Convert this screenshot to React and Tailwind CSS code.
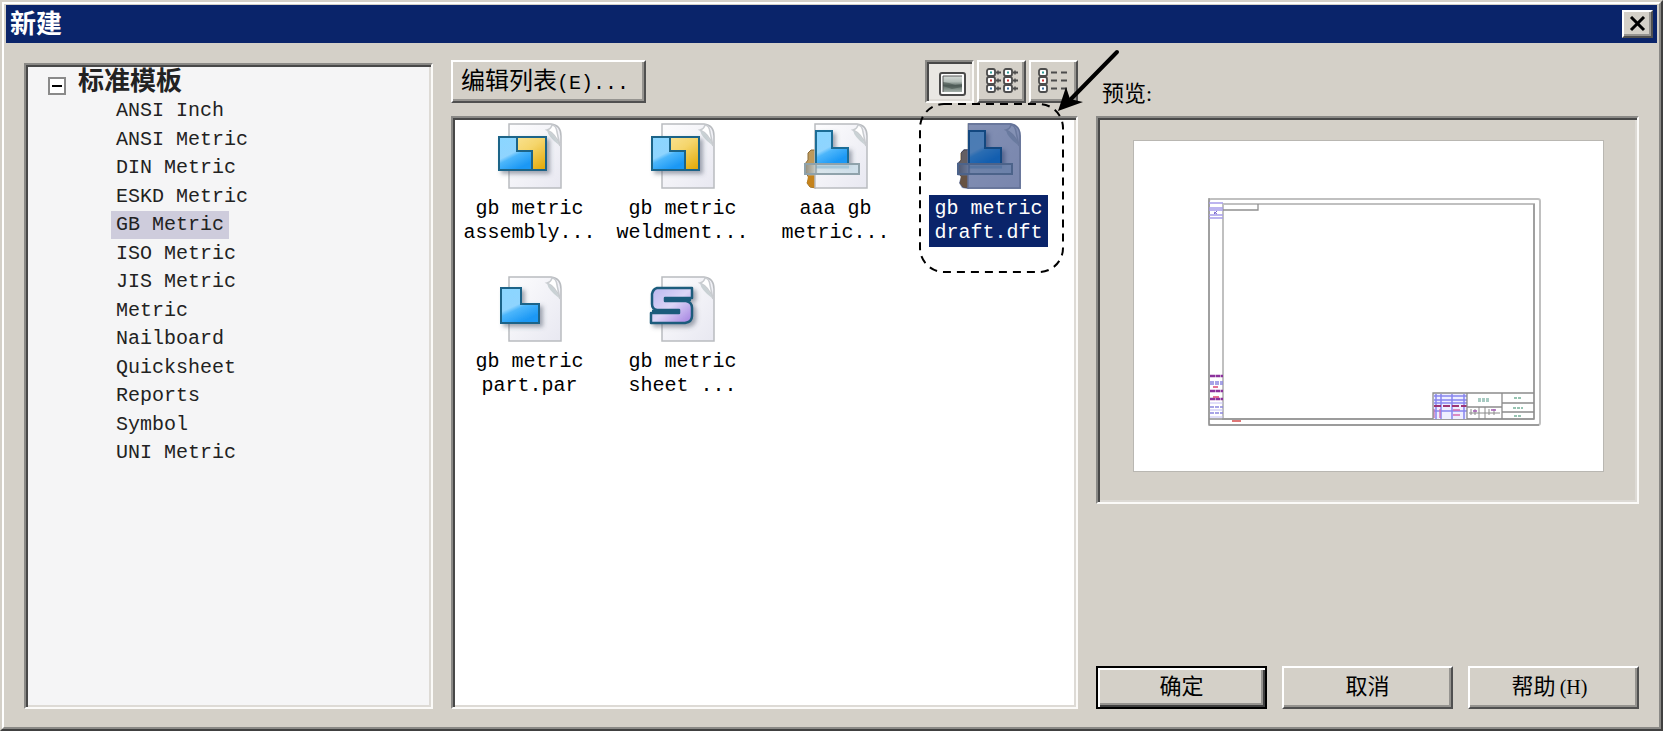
import React, { useState } from 'react';

const raised = 'bg-[#d4d0c8] border-2 border-t-white border-l-white border-b-[#505050] border-r-[#505050] shadow-[inset_-2px_-2px_0_#969490]';
const sunken = 'border-2 border-t-[#8a8986] border-l-[#8a8986] border-b-[#fbfaf8] border-r-[#fbfaf8] shadow-[inset_2px_2px_0_#484848,inset_-2px_-2px_0_#dddad5]';
const mono = "font-['Liberation_Mono','Noto_Sans_CJK_SC',monospace]";

const templates = [
    'ANSI Inch', 'ANSI Metric', 'DIN Metric', 'ESKD Metric', 'GB Metric', 'ISO Metric', 'JIS Metric',
    'Metric', 'Nailboard', 'Quicksheet', 'Reports', 'Symbol', 'UNI Metric',
];

const files = [
    { id: 'asm', kind: 'assembly', lines: ['gb metric', 'assembly...'] },
    { id: 'weld', kind: 'assembly', lines: ['gb metric', 'weldment...'] },
    { id: 'aaa', kind: 'draft', lines: ['aaa gb', 'metric...'] },
    { id: 'dft', kind: 'draft', lines: ['gb metric', 'draft.dft'] },
    { id: 'par', kind: 'part', lines: ['gb metric', 'part.par'] },
    { id: 'psm', kind: 'sheet', lines: ['gb metric', 'sheet ...'] },
];

const Gradients = () => (
    <svg className="absolute w-0 h-0" aria-hidden="true">
        <defs>
            <linearGradient id="blue" x1="0" y1="0" x2="0.5" y2="1">
                <stop offset="0" stopColor="#8ad6ff" />
                <stop offset="0.55" stopColor="#8fd4fe" />
                <stop offset="0.66" stopColor="#4cb6fb" />
                <stop offset="1" stopColor="#1b98f5" />
            </linearGradient>
            <linearGradient id="gold" x1="0" y1="0" x2="1" y2="1">
                <stop offset="0" stopColor="#fbe9a6" />
                <stop offset="0.5" stopColor="#f5d56b" />
                <stop offset="1" stopColor="#e2a600" />
            </linearGradient>
            <linearGradient id="violet" x1="0" y1="0" x2="1" y2="1">
                <stop offset="0" stopColor="#b9b6ee" />
                <stop offset="0.5" stopColor="#dcd6f7" />
                <stop offset="1" stopColor="#a27ee0" />
            </linearGradient>
            <linearGradient id="paper" x1="0" y1="0" x2="1" y2="1">
                <stop offset="0" stopColor="#fdfdfe" />
                <stop offset="1" stopColor="#e8e8f1" />
            </linearGradient>
            <linearGradient id="board" x1="0" y1="0" x2="1" y2="0">
                <stop offset="0" stopColor="#8e8c80" />
                <stop offset="0.25" stopColor="#d5e3ea" />
                <stop offset="1" stopColor="#c8dce8" />
            </linearGradient>
            <linearGradient id="photo" x1="0" y1="0" x2="0" y2="1">
                <stop offset="0" stopColor="#d5dbd8" />
                <stop offset="0.35" stopColor="#b3bdb8" />
                <stop offset="0.6" stopColor="#5d6b66" />
                <stop offset="1" stopColor="#a4b0aa" />
            </linearGradient>
            <filter id="soft" x="-20%" y="-20%" width="150%" height="150%">
                <feDropShadow dx="3" dy="3" stdDeviation="2" floodColor="#4a5568" floodOpacity="0.5" />
            </filter>
        </defs>
    </svg>
);

const FileIcon = ({ kind, selected }) => (
    <svg viewBox="0 0 68 68" className="w-[68px] h-[68px] shrink-0" aria-hidden="true">
        {kind === 'draft' && (
            <g>
                <path d="M9 28 H14 V66 L8 65 L5 61 L7 56 L3 49 L3 42 L6 38 L6 31 Z" fill="#bd9a5c" stroke="#8a6a38" strokeWidth="1" />
                <path d="M6 54 H13 V66 L8 65 L5 61 Z" fill="#c5831c" />
            </g>
        )}
        <path d="M13 2 H55 Q65 3 65 14 V66 H13 Z" fill="url(#paper)" stroke="#b9bcc0" strokeWidth="1.5" />
        <path d="M56 3 Q60 3 61 10 L64 24 Q60 12 51 8 Q55 7 56 3 Z" fill="#fff" stroke="#c9ccd0" strokeWidth="1.5" />
        <path d="M51 8 Q52 15 63 23 Q60 13 51 8Z" fill="#c9d1d4" />
        {kind === 'assembly' && (
            <g stroke="#1c6488" strokeWidth="2">
                <rect x="3" y="15" width="47" height="33" fill="url(#gold)" filter="url(#soft)" />
                <path d="M3 15 H21 V29 H36 V48 H3 Z" fill="url(#blue)" />
            </g>
        )}
        {kind === 'part' && (
            <path d="M5 13 H25 V29 H43 V48 H5 Z" fill="url(#blue)" stroke="#1c6488" strokeWidth="2" filter="url(#soft)" />
        )}
        {kind === 'sheet' && (
            <g>
                <path
                    d="M8 13 H43 V23 H16 V26 H37 Q43 27 43 33 V41 Q43 47 36 48 H2 V38 H30 V35 H8 Q3 34 3 29 V19 Q4 14 8 13 Z"
                    fill="url(#violet)" stroke="#1a5b7c" strokeWidth="2.5" strokeLinejoin="round" filter="url(#soft)"
                />
                <path d="M16 24.5 H42 M3 36.5 H30" stroke="#1a5b7c" strokeWidth="3.5" />
            </g>
        )}
        {kind === 'draft' && (
            <g>
                <path d="M14 9 H30 V26 H46 V42 H14 Z" fill="url(#blue)" stroke="#1d6d96" strokeWidth="2" filter="url(#soft)" />
                <rect x="3" y="42" width="54" height="10" fill="url(#board)" fillOpacity="0.85" stroke="#8fa2ab" strokeWidth="2" />
                <path d="M14 45 H47" stroke="#a4c6d8" strokeWidth="3" />
                <path d="M14 43 V51" stroke="#7c8c92" strokeWidth="1" />
            </g>
        )}
        {selected && (
            <path d="M13 1 H56 Q66 3 66 14 V67 H13 L7 66 L4 61 L6 54 L2 53 V41 L6 38 L6 30 L9 27 H13 Z" fill="#0a246a" fillOpacity="0.5" />
        )}
    </svg>
);

// Dashed frame and arrow that point out the selected template
const Callout = () => (
    <svg viewBox="0 0 145 170" className="absolute z-10 left-[7px] -top-[19px] w-[145px] h-[170px] overflow-visible pointer-events-none" aria-hidden="true">
        <rect x="1" y="1" width="143" height="168" rx="24" fill="none" stroke="#000" strokeWidth="2" strokeDasharray="8 6" />
        <path d="M198 -51 L152 -4" stroke="#000" strokeWidth="4" strokeLinecap="round" />
        <path d="M139 8 L147 -16 L151 -4 L164 -1 Z" fill="#000" />
    </svg>
);

const Knob = ({ x, y, dot }) => (
    <g>
        <rect x={x} y={y} width="8" height="7" rx="2" fill="#fff" stroke="#4c4c4c" strokeWidth="1.8" />
        <rect x={x + 3} y={y + 2.5} width="2" height="2" fill={dot} />
    </g>
);

const dots = ['#2e9a96', '#c33', '#3a6f9e'];

const ListIcon = () => (
    <svg viewBox="0 0 32 28" className="w-8 h-7" aria-hidden="true">
        {dots.map((dot, i) => (
            <g key={dot}>
                <Knob x={1} y={1 + i * 8} dot={dot} />
                <Knob x={18} y={1 + i * 8} dot={dot} />
                <path d={`M10 ${4.5 + i * 8} H15 M27 ${4.5 + i * 8} H32`} stroke="#4c4c4c" strokeWidth="1.8" />
                <path d={`M12 ${2.5 + i * 8} V${6.5 + i * 8} M29 ${2.5 + i * 8} V${6.5 + i * 8}`} stroke="#4c4c4c" strokeWidth="1.4" />
            </g>
        ))}
    </svg>
);

const DetailIcon = () => (
    <svg viewBox="0 0 32 28" className="w-8 h-7" aria-hidden="true">
        {dots.map((dot, i) => (
            <g key={dot}>
                <Knob x={1} y={1 + i * 8} dot={dot} />
                <path d={`M13 ${4.5 + i * 8} H19 M23 ${4.5 + i * 8} H29`} stroke="#4c4c4c" strokeWidth="1.8" />
            </g>
        ))}
    </svg>
);

const LargeIcon = () => (
    <svg viewBox="0 0 32 28" className="w-8 h-7 mt-1 ml-1" aria-hidden="true">
        <rect x="4" y="3" width="25" height="22" rx="2" fill="#fdfdfd" stroke="#4a4a4a" strokeWidth="2" />
        <rect x="7" y="6" width="19" height="16" fill="url(#photo)" />
        <path d="M7 22 V6 H26" fill="none" stroke="#5a5a5a" strokeWidth="1" />
        <path d="M7 12 L13 13 L19 15 L26 14 V17 L16 19 L7 16 Z" fill="#3d4a45" fillOpacity="0.5" />
    </svg>
);

const Drawing = () => (
    <svg viewBox="0 0 469 330" className="block w-full bg-white outline-1 outline-[#b9b7b2]" role="img" aria-label="gb metric draft.dft">
        <g fill="none" stroke="#c0c0c0" strokeWidth="2">
            <rect x="75" y="58" width="331" height="226" rx="2" />
            <rect x="89" y="63" width="311" height="215" />
        </g>
        <path d="M75 57 V284 H405" fill="none" stroke="#909090" strokeWidth="1.3" />
        <path d="M75 278 H400 M400 63 V278 M89 69 H124 V63" fill="none" stroke="#909090" strokeWidth="1.3" />
        <path d="M75 62 H89 M75 67 H89 M75 69 H89 M75 74 H89 M75 77 H89" stroke="#a79cea" strokeWidth="1.3" />
        <path d="M80 71 L83 73 M83 70 L80 73" stroke="#7765cf" strokeWidth="1" />
        <path d="M76 235 H89 M76 250 H89 M76 258 H89" stroke="#8c329c" strokeWidth="2.4" strokeDasharray="5 0.5" />
        <path d="M79 246 H84 M79 256 H85" stroke="#dd4774" strokeWidth="1.5" />
        <path d="M76 241 H89 M76 243 H89 M76 266 H89 M76 272 H89" stroke="#8c87e0" strokeWidth="1.6" strokeDasharray="4 1" />
        <path d="M76 262 H89 M76 269 H89 M76 276 H89" stroke="#c2bdf3" strokeWidth="1" />
        <path d="M98 280 H107" stroke="#d34a4a" strokeWidth="1.5" />
        <rect x="299" y="252" width="34" height="26" fill="#eeeeff" />
        <path d="M300 255 H333 M300 259 H333 M300 262 H333 M300 270 H333 M302 253 V278 M307 253 V278 M318 253 V278 M330 253 V278" stroke="#8785ef" strokeWidth="1.5" />
        <path d="M300 265 H333" stroke="#9c3474" strokeWidth="2" strokeDasharray="7 2" />
        <path d="M300 268 V277 M306 268 V277 M319 269 H326 M319 274 H326" stroke="#d46ab0" strokeWidth="1.3" />
        <path d="M299 278 V252 H400 M333 252 V278 M368 252 V278 M333 266 H368 M368 262 H400 M368 271 H400" fill="none" stroke="#8c8c8c" strokeWidth="1.3" />
        <path d="M337 268 V274 M341 268 V274 M345 266 V278 M351 266 V278 M355 268 V274 M360 268 V274 M335 272 H366" stroke="#8a8a8a" strokeWidth="1" />
        <path d="M339 270 H343 M357 269 H362" stroke="#a35bb4" strokeWidth="1.5" />
        <path d="M344 258 H356 M344 260 H356" stroke="#8cbbae" strokeWidth="1.6" strokeDasharray="3 1" />
        <path d="M380 257 H388 M379 267 H389 M380 275 H388" stroke="#75b199" strokeWidth="1.6" strokeDasharray="3 1" />
    </svg>
);

const ViewButton = ({ label, active, onClick, children }) => (
    <button
        type="button"
        aria-label={label}
        aria-pressed={active}
        onClick={onClick}
        className={`w-[49px] h-[43px] flex items-center justify-center ${active ? `${sunken} bg-[#e9e7e3]` : raised}`}
    >
        {children}
    </button>
);

const App = () => {
    const [folder, setFolder] = useState('GB Metric');
    const [selected, setSelected] = useState('dft');
    const [open, setOpen] = useState(true);
    const [view, setView] = useState('large');

    return (
        <div className={`min-h-screen flex flex-col bg-[#d4d0c8] border-2 border-t-[#d4d0c8] border-l-[#d4d0c8] border-b-[#404040] border-r-[#404040] text-black ${mono}`}>
            <Gradients />
            <div className="grow flex flex-col p-[3px] border-t-2 border-l-2 border-white border-b-2 border-r-2 border-b-[#8a8986] border-r-[#8a8986]">
                <header className="h-[38px] -mx-px -mt-0.5 pl-1 pr-1 flex items-center justify-between bg-[#0a246a]">
                    <h1 className="pt-1 text-white text-[26px] leading-8 font-bold">新建</h1>
                    <button type="button" aria-label="关闭" className={`w-[31px] h-7 flex items-center justify-center ${raised}`}>
                        <svg viewBox="0 0 18 16" className="w-[18px] h-4" aria-hidden="true">
                            <path d="M2 1 L15 14 M15 1 L2 14" stroke="#000" strokeWidth="3" />
                        </svg>
                    </button>
                </header>

                <main className="grow grid grid-cols-[minmax(0,409fr)_minmax(0,627fr)_minmax(0,543fr)] gap-x-[18px] px-[17px] pt-[17px] pb-[15px]">
                    <nav className={`mt-[3px] bg-[#f5f5f6] pt-0.5 pl-[22px] ${sunken}`}>
                        <div className="flex items-center gap-3">
                            <button
                                type="button"
                                aria-label="标准模板"
                                aria-expanded={open}
                                onClick={() => setOpen(!open)}
                                className="w-[18px] h-[18px] mt-2 flex items-center justify-center bg-white border-2 border-[#8a8a8a]"
                            >
                                <span className="w-2.5 h-0.5 bg-black" />
                            </button>
                            <span className="pt-0.5 text-[26px] leading-7 font-bold text-[#222]">标准模板</span>
                        </div>
                        {open && (
                            <ul className="h-[370px] flex flex-col justify-between pl-[63px] text-[20px] text-[#222]">
                                {templates.map(name => (
                                    <li key={name} className="flex">
                                        <button
                                            type="button"
                                            onClick={() => setFolder(name)}
                                            className={`h-7 leading-7 px-[5px] ${folder === name ? 'bg-[#ceccdc]' : ''}`}
                                        >
                                            {name}
                                        </button>
                                    </li>
                                ))}
                            </ul>
                        )}
                    </nav>

                    <section className="flex flex-col gap-[13px]">
                        <div className="flex justify-between">
                            <button type="button" className={`h-[43px] w-[195px] text-left pt-1 pl-2 text-[24px] leading-7 whitespace-nowrap ${raised}`}>
                                编辑列表<span className="text-[20px]">(E)...</span>
                            </button>
                            <div className="flex gap-[3px]">
                                <ViewButton label="大图标" active={view === 'large'} onClick={() => setView('large')}><LargeIcon /></ViewButton>
                                <ViewButton label="列表" active={view === 'list'} onClick={() => setView('list')}><ListIcon /></ViewButton>
                                <ViewButton label="详细信息" active={view === 'detail'} onClick={() => setView('detail')}><DetailIcon /></ViewButton>
                            </div>
                        </div>
                        <div className={`grow bg-white pt-1 flex flex-wrap content-start ${sunken}`}>
                            {files.map(f => (
                                <button
                                    key={f.id}
                                    type="button"
                                    onClick={() => setSelected(f.id)}
                                    className="relative w-[153px] h-[153px] flex flex-col items-center gap-[5px]"
                                >
                                    <FileIcon kind={f.kind} selected={selected === f.id} />
                                    <span className={`px-[5px] py-0.5 text-[20px] leading-6 ${selected === f.id ? 'bg-[#0a246a] text-white' : ''}`}>
                                        {f.lines[0]}<br />{f.lines[1]}
                                    </span>
                                    {selected === f.id && <Callout />}
                                </button>
                            ))}
                        </div>
                    </section>

                    <section className="flex flex-col">
                        <h2 className="h-14 pt-[18px] pl-1.5 text-[22px] leading-8">预览<span className="font-['Liberation_Serif',serif]">:</span></h2>
                        <div className={`pt-[23px] pb-[31px] pl-9 pr-[34px] ${sunken}`}>
                            <Drawing />
                        </div>
                        <div className="mt-auto grid grid-cols-3 gap-[15px] text-[22px]">
                            <button type="button" className="h-[43px] pt-0.5 border-2 border-black bg-[#d4d0c8] shadow-[inset_2px_2px_0_#fff,inset_-2px_-2px_0_#404040,inset_-4px_-4px_0_#969490]">确定</button>
                            <button type="button" className={`h-[43px] pt-0.5 ${raised}`}>取消</button>
                            <button type="button" className={`h-[43px] pt-0.5 pr-2 ${raised}`}>
                                帮助<span className="ml-1 text-[20px] font-['Liberation_Serif',serif]">(H)</span>
                            </button>
                        </div>
                    </section>
                </main>
            </div>
        </div>
    );
};

export default App;
